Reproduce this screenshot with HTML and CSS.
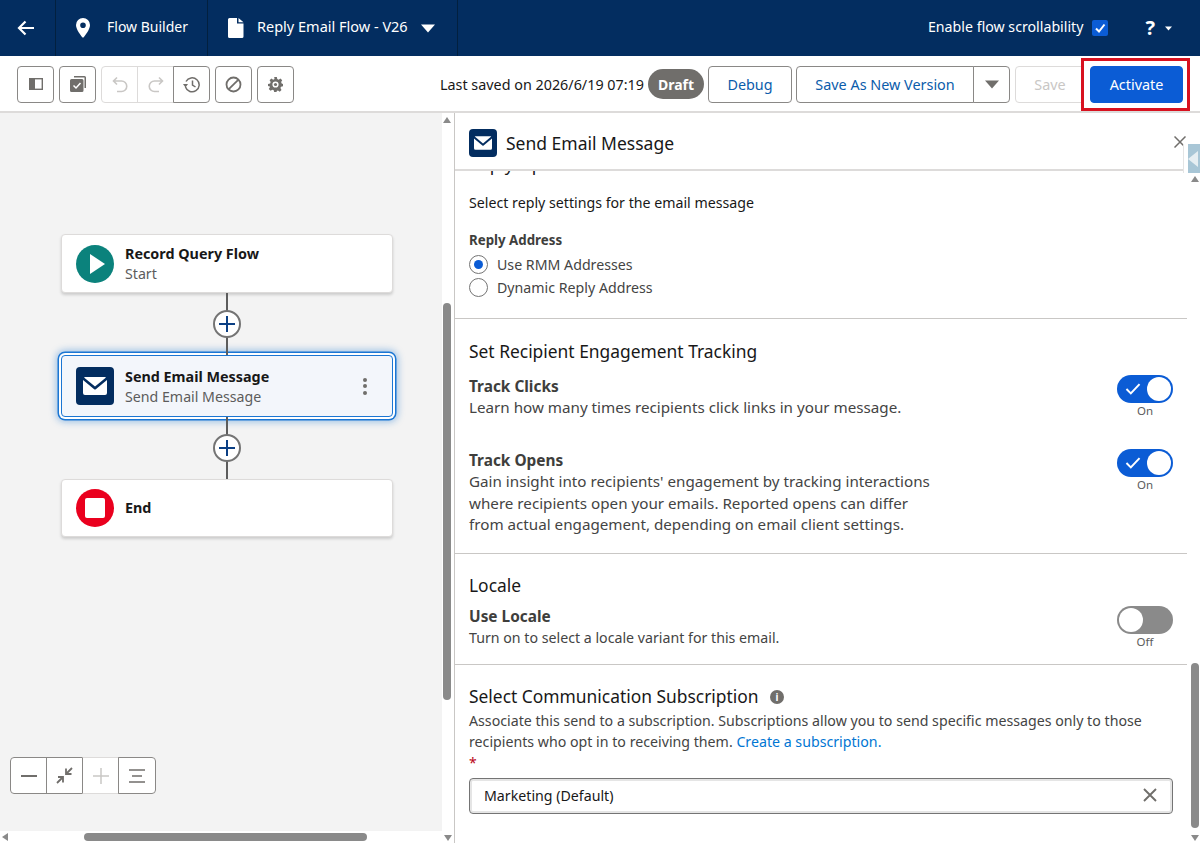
FILE: index.html
```html
<!DOCTYPE html>
<html lang="en">
<head>
  <meta charset="UTF-8">
  <title>Flow Builder</title>
  <link rel="stylesheet" href="styles.css">
</head>
<body>

<!-- Top bar -->
<header class="topbar">
  <div class="top-cell back-cell">
    <svg width="20" height="20" viewBox="0 0 20 20"><path d="M18 10H3M9.500 3.500 3 10l6.500 6.500" fill="none" stroke="#fff" stroke-width="2.200"/></svg>
  </div>
  <div class="top-cell builder-cell">
    <svg width="16" height="20" viewBox="0 0 16 20"><path fill-rule="evenodd" d="M8 0a7 7 0 0 0-7 7c0 4.500 5 10.500 6.300 12.300a.9.9 0 0 0 1.400 0C10 17.500 15 11.500 15 7a7 7 0 0 0-7-7Zm0 4.400a2.800 2.800 0 1 1 0 5.600 2.800 2.800 0 0 1 0-5.600Z" fill="#fff"/></svg>
    <span>Flow Builder</span>
  </div>
  <div class="top-cell file-cell">
    <svg width="16" height="20" viewBox="0 0 16 20"><path d="M1.500 0H9v5.500h6.500V18.500A1.500 1.500 0 0 1 14 20H1.500A1.500 1.500 0 0 1 0 18.500V1.500A1.500 1.500 0 0 1 1.500 0ZM10.500 0 15.500 4.200H10.500Z" fill="#fff"/></svg>
    <span class="file-name">Reply Email Flow - V26</span>
    <svg class="file-caret" width="14" height="9" viewBox="0 0 14 9"><path d="M0 .5h14L7 8.500Z" fill="#fff"/></svg>
  </div>
  <div class="top-right">
    <span class="scroll-label">Enable flow scrollability</span>
    <span class="checkbox">
      <svg width="12" height="12" viewBox="0 0 12 12"><path d="M2 6.500 5 9.500 10.500 2.500" fill="none" stroke="#fff" stroke-width="2"/></svg>
    </span>
    <span class="help">?</span>
    <svg width="7" height="5" viewBox="0 0 7 5"><path d="M0 .5h7L3.500 4.500Z" fill="#fff"/></svg>
  </div>
</header>

<!-- Toolbar -->
<div class="toolbar">
  <div class="tool-left">
    <button class="icon-btn">
      <svg width="14" height="12" viewBox="0 0 14 12"><rect x=".7" y=".7" width="12.600" height="10.600" fill="none" stroke="#706e6b" stroke-width="1.400"/><rect x="1" y="1" width="5" height="10" fill="#706e6b"/></svg>
    </button>
    <button class="icon-btn">
      <svg width="16" height="16" viewBox="0 0 16 16"><path d="M4 0h10.500A1.500 1.500 0 0 1 16 1.500V12h-1.500V1.500H4Z" fill="#706e6b"/><path d="M1.500 3H12a1.500 1.500 0 0 1 1.500 1.500V14.500A1.500 1.500 0 0 1 12 16H1.500A1.500 1.500 0 0 1 0 14.500V4.500A1.500 1.500 0 0 1 1.500 3Z" fill="#706e6b"/><path d="M3.500 9.500 6 12l4.500-5" fill="none" stroke="#fff" stroke-width="1.500"/></svg>
    </button>
    <div class="btn-group">
      <button class="icon-btn group-btn is-off">
        <svg width="16" height="17" viewBox="0 0 16 17"><path d="M5 1.500 1.500 5 5 8.500M2 5h7.500a5 5 0 0 1 0 10.500H5" fill="none" stroke="#c9c7c5" stroke-width="1.600"/></svg>
      </button>
      <button class="icon-btn group-btn is-off">
        <svg width="16" height="17" viewBox="0 0 16 17"><path d="M11 1.500 14.500 5 11 8.500M14 5H6.500a5 5 0 0 0 0 10.500H11" fill="none" stroke="#c9c7c5" stroke-width="1.600"/></svg>
      </button>
      <button class="icon-btn group-btn">
        <svg width="17" height="17" viewBox="0 0 17 17"><path d="M3 5.500A7 7 0 1 1 2.500 11" fill="none" stroke="#706e6b" stroke-width="1.500"/><path d="M9.500 4.500V9l3 2" fill="none" stroke="#706e6b" stroke-width="1.500"/><path d="M0 8h5l-2.500 3.500Z" fill="#706e6b"/></svg>
      </button>
    </div>
    <button class="icon-btn">
      <svg width="17" height="17" viewBox="0 0 17 17"><circle cx="8.500" cy="8.500" r="7" fill="none" stroke="#706e6b" stroke-width="1.800"/><path d="M3.800 13.200 13.200 3.800" stroke="#706e6b" stroke-width="1.800"/></svg>
    </button>
    <button class="icon-btn">
      <svg width="15" height="15" viewBox="0 0 17 17"><path fill-rule="evenodd" d="M7 0h3l.5 2.300 1.600.7 2-1.300 2 2.100-1.200 2 .6 1.600L17 8v2.500l-2.300.6-.6 1.500 1.200 2-2 2-2-1.200-1.600.6L10 17H7l-.5-2-1.600-.6-2 1.200-2-2 1.200-2-.6-1.500L0 10.500V8l2.400-.6L3 5.800l-1.200-2 2-2.100 2 1.300 1.600-.7ZM8.500 5a3.500 3.500 0 1 0 0 7 3.500 3.500 0 0 0 0-7Z" fill="#706e6b"/><circle cx="8.500" cy="8.500" r="1.800" fill="#706e6b"/></svg>
    </button>
  </div>
  <div class="tool-right">
    <span class="saved">Last saved on 2026/6/19 07:19</span>
    <span class="draft">Draft</span>
    <button class="btn debug-btn">Debug</button>
    <div class="save-as">
      <button class="btn save-as-btn">Save As New Version</button>
      <button class="btn caret-btn">
        <svg width="14" height="9" viewBox="0 0 14 9"><path d="M0 .5h14L7 8.500Z" fill="#706e6b"/></svg>
      </button>
    </div>
    <button class="btn save-btn">Save</button>
    <div class="activate-mark">
      <button class="btn activate-btn">Activate</button>
    </div>
  </div>
</div>

<div class="workspace">

  <!-- Flow canvas -->
  <div class="canvas">
    <div class="node">
      <span class="node-icon round teal">
        <svg width="18" height="22" viewBox="0 0 18 22"><path d="M2 1 17 11 2 21Z" fill="#fff"/></svg>
      </span>
      <div class="node-text">
        <b>Record Query Flow</b>
        <span>Start</span>
      </div>
    </div>
    <div class="connector"><span class="plus"></span></div>
    <div class="node node-selected">
      <span class="node-icon navy">
        <svg width="24" height="18" viewBox="0 0 24 18"><path d="M2 0h20a1.500 1.500 0 0 1 1 .4L12 9.500 1 .4A1.500 1.500 0 0 1 2 0ZM0 3l11.200 9.300a1.300 1.300 0 0 0 1.600 0L24 3v13a2 2 0 0 1-2 2H2a2 2 0 0 1-2-2Z" fill="#fff"/></svg>
      </span>
      <div class="node-text">
        <b>Send Email Message</b>
        <span>Send Email Message</span>
      </div>
      <span class="dots"><i></i><i></i><i></i></span>
    </div>
    <div class="connector"><span class="plus"></span></div>
    <div class="node node-end">
      <span class="node-icon round red">
        <span class="stop"></span>
      </span>
      <div class="node-text">
        <b>End</b>
      </div>
    </div>

    <div class="zoom-ctrl">
      <button class="zoom-btn"><svg width="16" height="2" viewBox="0 0 16 2"><rect width="16" height="2" fill="#706e6b"/></svg></button>
      <button class="zoom-btn"><svg width="17" height="17" viewBox="0 0 17 17"><path d="M16 1 11 6M10 1.500V7h5.500M1 16l5-5M2 10h5v5.500" fill="none" stroke="#706e6b" stroke-width="1.800"/></svg></button>
      <button class="zoom-btn is-off"><svg width="16" height="16" viewBox="0 0 16 16"><path d="M8 0v16M0 8h16" stroke="#c9c7c5" stroke-width="1.500"/></svg></button>
      <button class="zoom-btn"><svg width="16" height="14" viewBox="0 0 16 14"><path d="M0 1h16M3 7h10M0 13h16" stroke="#706e6b" stroke-width="1.700"/></svg></button>
    </div>

    <div class="vscroll"><span class="arr-up"></span><span class="vthumb"></span></div>
    <div class="hscroll"><span class="arr-left"></span><span class="hthumb"></span><span class="arr-down"></span></div>
  </div>

  <!-- Properties panel -->
  <aside class="panel">
    <div class="panel-head">
      <span class="panel-icon">
        <svg width="18" height="14" viewBox="0 0 24 18"><path d="M2 0h20a1.500 1.500 0 0 1 1 .4L12 9.500 1 .4A1.500 1.500 0 0 1 2 0ZM0 3l11.200 9.300a1.300 1.300 0 0 0 1.600 0L24 3v13a2 2 0 0 1-2 2H2a2 2 0 0 1-2-2Z" fill="#fff"/></svg>
      </span>
      <h2>Send Email Message</h2>
      <svg class="panel-close" width="12" height="12" viewBox="0 0 12 12"><path d="M.5.500l11 11M11.500.500l-11 11" stroke="#706e6b" stroke-width="1.500"/></svg>
    </div>
    <div class="side-tab"><svg width="10" height="16" viewBox="0 0 10 16"><path d="M10 0v16L0 8Z" fill="#e6eef2"/></svg></div>

    <div class="panel-body">
      <section class="sec sec-reply">
        <h3 class="clipped">Reply Options</h3>
        <p class="lead">Select reply settings for the email message</p>
        <div class="field-label">Reply Address</div>
        <label class="radio"><span class="dot on"></span>Use RMM Addresses</label>
        <label class="radio"><span class="dot"></span>Dynamic Reply Address</label>
      </section>

      <section class="sec sec-track">
        <h3>Set Recipient Engagement Tracking</h3>
        <div class="opt opt-clicks">
          <div class="opt-text">
            <h4>Track Clicks</h4>
            <p>Learn how many times recipients click links in your message.</p>
          </div>
          <div class="toggle-wrap">
            <span class="toggle on">
              <svg width="16" height="12" viewBox="0 0 14 11"><path d="M1 5.500 5 9.500 13 1" fill="none" stroke="#fff" stroke-width="1.800"/></svg>
              <span class="knob"></span>
            </span>
            <small>On</small>
          </div>
        </div>
        <div class="opt opt-opens">
          <div class="opt-text">
            <h4>Track Opens</h4>
            <p>Gain insight into recipients' engagement by tracking interactions where recipients open your emails. Reported opens can differ from actual engagement, depending on email client settings.</p>
          </div>
          <div class="toggle-wrap">
            <span class="toggle on">
              <svg width="16" height="12" viewBox="0 0 14 11"><path d="M1 5.500 5 9.500 13 1" fill="none" stroke="#fff" stroke-width="1.800"/></svg>
              <span class="knob"></span>
            </span>
            <small>On</small>
          </div>
        </div>
      </section>

      <section class="sec sec-locale">
        <h3>Locale</h3>
        <div class="opt">
          <div class="opt-text">
            <h4>Use Locale</h4>
            <p>Turn on to select a locale variant for this email.</p>
          </div>
          <div class="toggle-wrap">
            <span class="toggle"><span class="knob"></span></span>
            <small>Off</small>
          </div>
        </div>
      </section>

      <section class="sec sec-sub">
        <h3>Select Communication Subscription <span class="info">i</span></h3>
        <p class="sub-desc">Associate this send to a subscription. Subscriptions allow you to send specific messages only to those recipients who opt in to receiving them. <a href="#">Create a subscription.</a></p>
        <div class="req">*</div>
        <div class="sub-input">
          <span>Marketing (Default)</span>
          <svg width="14" height="14" viewBox="0 0 14 14"><path d="M1 1l12 12M13 1 1 13" stroke="#706e6b" stroke-width="1.900"/></svg>
        </div>
      </section>
    </div>

    <div class="panel-scroll"><span class="arr-up"></span><span class="pthumb"></span><span class="arr-down"></span></div>
  </aside>
</div>

</body>
</html>
```

FILE: styles.css
```css
* {
  box-sizing: border-box;
}
body {
  margin: 0;
  width: 1200px;
  height: 843px;
  overflow: hidden;
  font-family: "Noto Sans", "Open Sans", sans-serif;
  font-size: 14.2px;
  color: #3e3e3c;
  background: #fff;
}
button {
  font-family: inherit;
}

/* top bar */
.topbar {
  height: 56px;
  background: #032d60;
  display: flex;
  align-items: center;
  color: #fff;
  font-size: 14px;
}
.top-cell {
  height: 56px;
  display: flex;
  align-items: center;
  border-right: 1px solid #02203f;
}
.top-cell span,
.scroll-label {
  padding-bottom: 4px;
}
.back-cell {
  width: 56px;
  padding-left: 16px;
}
.builder-cell {
  width: 152px;
  padding-left: 19px;
  gap: 16px;
}
.file-cell {
  width: 250px;
  padding-left: 20px;
  gap: 13px;
}
.file-name {
  font-size: 14.5px;
}
.file-caret {
  margin-left: 0;
}
.top-right {
  margin-left: auto;
  display: flex;
  align-items: center;
  padding-right: 28px;
}
.scroll-label {
  font-size: 14.2px;
}
.checkbox {
  width: 16px;
  height: 16px;
  margin-left: 9px;
  border-radius: 2px;
  background: #0b5cd5;
  display: flex;
  align-items: center;
  justify-content: center;
}
.help {
  margin-left: 37px;
  margin-right: 10px;
  font-size: 20px;
  font-weight: 700;
  line-height: 1;
}

/* toolbar */
.toolbar {
  height: 57px;
  border-bottom: 2px solid #dddbda;
  display: flex;
  align-items: center;
  justify-content: space-between;
  padding: 1px 17px 0;
}
.tool-left {
  display: flex;
  gap: 5px;
}
.icon-btn {
  width: 37px;
  height: 37px;
  padding: 0;
  background: #fff;
  border: 1px solid #8a8886;
  border-radius: 4px;
  display: flex;
  align-items: center;
  justify-content: center;
}
.btn-group {
  display: flex;
}
.group-btn {
  border-radius: 0;
  margin-left: -1px;
}
.group-btn:first-child {
  border-radius: 4px 0 0 4px;
  margin-left: 0;
}
.group-btn:last-child {
  border-radius: 0 4px 4px 0;
}
.is-off {
  border-color: #dddbda;
}
.tool-right {
  display: flex;
  align-items: center;
}
.saved {
  font-size: 14.350px;
  color: #181818;
  margin-right: 4px;
}
.draft {
  width: 56px;
  height: 30px;
  border-radius: 15px;
  background: #706e6b;
  color: #fff;
  font-weight: 700;
  font-size: 14px;
  display: flex;
  align-items: center;
  justify-content: center;
  margin-right: 4px;
}
.btn {
  height: 37px;
  background: #fff;
  border: 1px solid #8a8886;
  border-radius: 4px;
  color: #0b5cab;
  font-size: 14.4px;
  padding: 0;
}
.debug-btn {
  width: 84px;
  margin-right: 4px;
}
.save-as {
  display: flex;
  margin-right: 5px;
}
.save-as-btn {
  width: 178px;
  border-radius: 4px 0 0 4px;
}
.caret-btn {
  width: 37px;
  margin-left: -1px;
  border-radius: 0 4px 4px 0;
  display: flex;
  align-items: center;
  justify-content: center;
}
.save-btn {
  width: 70px;
  color: #c9c7c5;
  border-color: #dddbda;
}
/* red marker drawn round the Activate button */
.activate-mark {
  border: 3px solid #d8111f;
  margin: 0 -7px 0 -4px;
  padding: 5px 4px 5px 6px;
  height: 53px;
  display: flex;
  position: relative;
  background: #fff;
}
.activate-btn {
  width: 93px;
  background: #0b5cd5;
  border-color: #0b5cd5;
  color: #fff;
}

/* work area */
.workspace {
  height: 730px;
  display: flex;
}

/* canvas */
.canvas {
  width: 455px;
  height: 730px;
  position: relative;
  background: #f3f3f3;
  padding: 121px 0 0 61px;
  border-right: 1px solid #c9c7c5;
}
.node {
  width: 332px;
  height: 59px;
  background: #fff;
  border: 1px solid #dddbda;
  border-radius: 4px;
  box-shadow: 0 2px 3px rgba(0, 0, 0, 0.16);
  display: flex;
  align-items: center;
  padding-left: 14px;
}
.node-selected {
  height: 62px;
  background: #f3f6fb;
  border: 1px solid #1b76d3;
  box-shadow: 0 0 0 2px #fff, 0 0 0 3.500px #1b76d3, 0 0 7px 5px rgba(27, 118, 211, 0.4);
}
.node-end {
  height: 58px;
  padding-bottom: 1px;
}
.node-icon {
  width: 38px;
  height: 38px;
  border-radius: 4px;
  display: flex;
  align-items: center;
  justify-content: center;
  flex-shrink: 0;
}
.round {
  border-radius: 50%;
}
.teal {
  background: #0b827c;
  padding-left: 3px;
}
.navy {
  background: #032d60;
}
.red {
  background: #ea001e;
}
.stop {
  width: 20px;
  height: 20px;
  border-radius: 2px;
  background: #fff;
}
.node-text {
  margin-left: 11px;
  display: flex;
  flex-direction: column;
  flex: 1;
}
.node-text b {
  font-size: 14.350px;
  line-height: 21px;
  color: #181818;
}
.node-text span {
  font-size: 14.2px;
  line-height: 20px;
  color: #5c5c5c;
}
.dots {
  display: flex;
  flex-direction: column;
  gap: 2.500px;
  margin-right: 25px;
}
.dots i {
  width: 4px;
  height: 4px;
  border-radius: 50%;
  background: #706e6b;
}
.connector {
  width: 332px;
  height: 62px;
  display: flex;
  align-items: center;
  justify-content: center;
  position: relative;
}
.connector::before {
  content: "";
  width: 2px;
  height: 100%;
  background: #5c5c5c;
  position: absolute;
  left: 165px;
  top: 0;
}
.plus {
  width: 28px;
  height: 28px;
  border-radius: 50%;
  border: 2px solid #747474;
  background: #fff;
  position: relative;
}
.plus::before,
.plus::after {
  content: "";
  position: absolute;
  background: #0b3f84;
}
.plus::before {
  left: 4px;
  top: 11px;
  width: 16px;
  height: 2px;
}
.plus::after {
  left: 11px;
  top: 4px;
  width: 2px;
  height: 16px;
}
.zoom-ctrl {
  position: absolute;
  left: 10px;
  top: 644px;
  display: flex;
  background: #fff;
  border-radius: 4px;
}
.zoom-btn {
  width: 37px;
  height: 37px;
  margin-left: -1px;
  padding: 0;
  background: #fff;
  border: 1px solid #8a8886;
  display: flex;
  align-items: center;
  justify-content: center;
}
.zoom-btn:first-child {
  margin-left: 0;
  border-radius: 4px 0 0 4px;
}
.zoom-btn:last-child {
  width: 38px;
  border-radius: 0 4px 4px 0;
}
.zoom-btn.is-off {
  border-color: #dddbda;
  border-right-color: #8a8886;
  border-left-color: #8a8886;
}

/* scrollbars */
.vscroll {
  position: absolute;
  right: 0;
  top: 0;
  width: 12px;
  height: 718px;
  background: #fff;
}
.arr-up {
  position: absolute;
  left: 1px;
  top: 4px;
  border: 4px solid transparent;
  border-top: 0;
  border-bottom: 6px solid #8a8a8a;
}
.vthumb {
  position: absolute;
  left: 1px;
  top: 190px;
  width: 8px;
  height: 397px;
  border-radius: 4px;
  background: #8a8a8a;
}
.hscroll {
  position: absolute;
  left: 0;
  bottom: 0;
  width: 454px;
  height: 12px;
  background: #fff;
}
.arr-left {
  position: absolute;
  left: 2px;
  top: 2px;
  border: 4px solid transparent;
  border-left: 0;
  border-right: 6px solid #8a8a8a;
}
.hthumb {
  position: absolute;
  left: 84px;
  top: 2px;
  width: 283px;
  height: 8px;
  border-radius: 4px;
  background: #8a8a8a;
}
.hscroll .arr-down {
  position: absolute;
  left: 444px;
  top: 4px;
  border: 4px solid transparent;
  border-bottom: 0;
  border-top: 6px solid #8a8a8a;
}

/* panel */
.panel {
  flex: 1;
  position: relative;
  height: 730px;
  overflow: hidden;
  padding-right: 13px;
}
.panel-head {
  height: 58px;
  border-bottom: 2px solid #dddbda;
  display: flex;
  align-items: center;
  padding: 3px 0 0 14px;
  margin-right: -1px;
  background: #fff;
  position: relative;
  z-index: 1;
}
.panel-icon {
  width: 28px;
  height: 28px;
  border-radius: 4px;
  background: #032d60;
  display: flex;
  align-items: center;
  justify-content: center;
}
.panel-head h2 {
  margin: 0 0 0 9px;
  font-size: 17.5px;
  font-weight: 400;
  color: #181818;
}
.panel-close {
  margin-left: auto;
  margin-right: 2px;
  margin-top: -1px;
}
.side-tab {
  position: absolute;
  right: 0;
  top: 31px;
  width: 12px;
  height: 29px;
  background: #a8c6d6;
  box-shadow: -4px 0 0 #fff, -5px 0 0 #e5e5e5;
  z-index: 2;
  display: flex;
  align-items: center;
}
.panel-body {
  padding: 0;
}
.sec {
  padding: 0 14px;
  border-bottom: 1px solid #c9c7c5;
}
.sec h3 {
  margin: 0;
  font-size: 17.4px;
  line-height: 24px;
  font-weight: 400;
  color: #181818;
}
.sec-reply {
  height: 167px;
}
.sec-reply .clipped {
  margin-top: -19px;
}
.lead {
  margin: 17px 0 0;
  line-height: 20px;
  color: #181818;
}
.field-label {
  margin-top: 18px;
  font-size: 13.3px;
  font-weight: 700;
  line-height: 18px;
  color: #3e3e3c;
}
.radio {
  display: flex;
  align-items: center;
  height: 23px;
  margin-top: 4px;
  color: #444;
}
.radio:last-child {
  margin-top: 0;
}
.dot {
  width: 19px;
  height: 19px;
  border: 1px solid #747474;
  border-radius: 50%;
  margin-right: 9px;
  background: #fff;
  display: flex;
  align-items: center;
  justify-content: center;
}
.dot.on::after {
  content: "";
  width: 9px;
  height: 9px;
  border-radius: 50%;
  background: #0b5cd5;
}
.sec-track {
  height: 235px;
  padding-top: 20px;
}
.opt {
  display: flex;
  justify-content: space-between;
  align-items: flex-start;
}
.opt-clicks {
  margin-top: 12px;
}
.opt-opens {
  margin-top: 30px;
}
.opt-text {
  width: 470px;
}
.opt h4 {
  margin: 0;
  padding-top: 1px;
  font-size: 15.4px;
  line-height: 21px;
  font-weight: 700;
  color: #3e3e3c;
}
.opt p {
  margin: 0;
  line-height: 21.500px;
  font-size: 15.2px;
  color: #444;
}
.sec-locale .opt p {
  font-size: 14.2px;
}
.toggle-wrap {
  width: 56px;
  display: flex;
  flex-direction: column;
  align-items: center;
}
.toggle-wrap small {
  font-size: 11.500px;
  line-height: 16px;
  color: #5c5c5c;
}
.toggle {
  width: 56px;
  height: 28px;
  border-radius: 14px;
  background: #8a8a8a;
  display: flex;
  align-items: center;
  padding: 0 2px;
  justify-content: flex-start;
}
.toggle.on {
  background: #0b5cd5;
  justify-content: space-between;
  padding-left: 8px;
}
.knob {
  width: 24px;
  height: 24px;
  border-radius: 50%;
  background: #fff;
}
.sec-locale {
  height: 111px;
  padding-top: 19px;
}
.sec-locale .opt {
  margin-top: 9px;
}
.sec-locale .opt h4 {
  line-height: 20px;
}
.sec-sub {
  border-bottom: 0;
  padding-top: 19px;
}
.info {
  display: inline-flex;
  width: 14px;
  height: 14px;
  margin-left: 7px;
  border-radius: 50%;
  background: #706e6b;
  color: #fff;
  font-size: 10px;
  font-weight: 700;
  align-items: center;
  justify-content: center;
  vertical-align: 2px;
}
.sub-desc {
  margin: 2px 0 0;
  line-height: 21px;
  color: #444;
}
.sub-desc a {
  color: #0176d3;
  text-decoration: none;
}
.req {
  color: #ba0517;
  font-size: 14px;
  line-height: 16px;
  margin-top: 3px;
}
.sub-input {
  height: 36px;
  margin-top: 7px;
  border: 1px solid #747474;
  border-radius: 4px;
  box-shadow: inset 0 0 0 2px #e5e5e5;
  display: flex;
  align-items: center;
  justify-content: space-between;
  padding: 0 15px 2px 14px;
  color: #181818;
}
.panel-scroll {
  position: absolute;
  right: 0;
  top: 58px;
  bottom: 0;
  width: 13px;
  background: #fff;
}
.panel-scroll .arr-up {
  left: 4px;
  top: 5px;
}
.pthumb {
  position: absolute;
  left: 4px;
  top: 492px;
  width: 8px;
  height: 165px;
  border-radius: 4px;
  background: #8a8a8a;
}
.panel-scroll .arr-down {
  position: absolute;
  left: 4px;
  top: 664px;
  border: 4px solid transparent;
  border-bottom: 0;
  border-top: 6px solid #8a8a8a;
}
```
